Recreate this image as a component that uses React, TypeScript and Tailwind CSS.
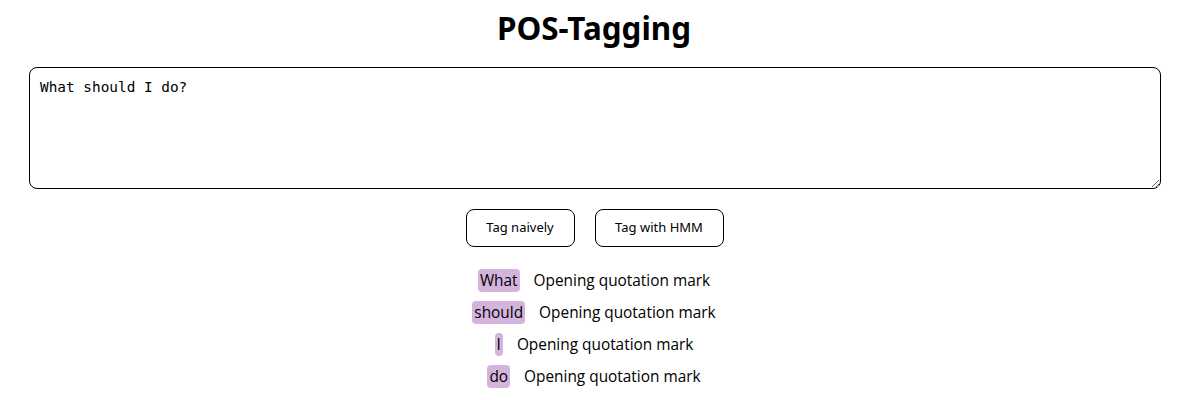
const tokens = ["What", "should", "I", "do"];

export default function App() {
  return (
    <div className="w-[1188px] h-[400px] bg-white text-black font-['Noto_Sans',sans-serif]">
      <h1 className="pt-[9px] text-center text-[31.4px] leading-[38px] font-bold">POS-Tagging</h1>
      <div className="pl-[29px] pt-[20px]">
        <textarea
          className="block w-[1132px] h-[122px] border border-black rounded-[8px] px-[10px] pt-[11px] font-['DejaVu_Sans_Mono',monospace] text-[14.4px] leading-[17px] outline-none resize-y"
          defaultValue="What should I do?"
        />
      </div>
      <div className="flex justify-center gap-[20px] mt-[20px] ml-[1px]">
        <button className="w-[109px] h-[38px] border border-black rounded-[8px] bg-white text-[13px]">
          Tag naively
        </button>
        <button className="w-[129px] h-[38px] border border-black rounded-[8px] bg-white text-[13px]">
          Tag with HMM
        </button>
      </div>
      <div className="flex flex-col items-center mt-[22px] gap-[9px] font-['Open_Sans',sans-serif]">
        {tokens.map((t) => (
          <div key={t} className="flex items-center gap-[14px] text-[15.4px] leading-[23px]">
            <span className="bg-[#d4b4dc] rounded-[4px] px-[2px]">{t}</span>
            <span>Opening quotation mark</span>
          </div>
        ))}
      </div>
    </div>
  );
}
